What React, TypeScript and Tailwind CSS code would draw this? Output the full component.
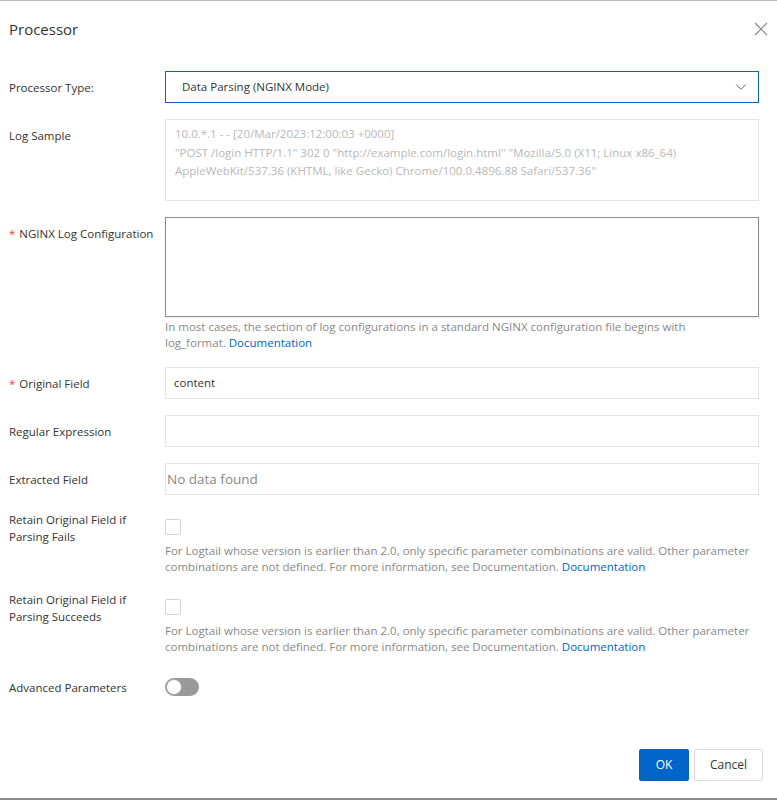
import { ChevronDown } from "lucide-react";

const font = { fontFamily: '"Segoe UI", "Open Sans", "Noto Sans", sans-serif' };

function Label({ text, required, top }: { text: string; required?: boolean; top?: boolean }) {
  return (
    <div className={`w-[156px] shrink-0 pr-1 text-[11.5px] leading-[17px] text-[#333] ${top ? "pt-2" : ""}`}>
      {required && <span className="mr-1 text-[#f23c3c]">*</span>}
      {text}
    </div>
  );
}

function Help({ children, gap }: { children: React.ReactNode; gap?: boolean }) {
  return <div className={`text-[11.5px] leading-4 text-[#888] ${gap ? "mt-[2px]" : ""}`}>{children}</div>;
}

const Doc = () => <a className="text-[#0064c8]">Documentation</a>;

const notice =
  "For Logtail whose version is earlier than 2.0, only specific parameter combinations are valid. Other parameter combinations are not defined. For more information, see Documentation. ";

export default function App() {
  return (
    <div style={font} className="flex h-[800px] w-[777px] flex-col border-t border-[#bcbcbc] bg-white">
      <div className="flex h-[56px] items-center justify-between pl-[9px] pr-2">
        <h1 className="text-[15px] text-[#333]">Processor</h1>
        <svg width="14" height="14" viewBox="0 0 14 14" className="mr-[1px]">
          <path d="M1 1 L13 13 M13 1 L1 13" stroke="#888" strokeWidth="1.2" fill="none" />
        </svg>
      </div>

      <div className="flex flex-1 flex-col gap-4 pl-[9px] pr-[18px] pt-[14px]">
        <div className="flex items-center">
          <Label text="Processor Type:" />
          <div className="flex h-8 flex-1 items-center justify-between border border-[#0064c8] pl-4 pr-2 text-[11.5px] text-[#333]">
            <span>Data Parsing (NGINX Mode)</span>
            <ChevronDown className="h-[18px] w-[18px] text-[#666]" strokeWidth={1.3} />
          </div>
        </div>

        <div className="flex">
          <Label text="Log Sample" top />
          <div className="h-[82px] flex-1 border border-[#e3e3e3] px-[9px] pt-[5px] text-[11.5px] leading-[18.5px] text-[#b8b8b8]">
            10.0.*.1 - - [20/Mar/2023:12:00:03 +0000]
            <br />
            "POST /login HTTP/1.1" 302 0 "http://example.com/login.html" "Mozilla/5.0 (X11; Linux x86_64)
            <br />
            AppleWebKit/537.36 (KHTML, like Gecko) Chrome/100.0.4896.88 Safari/537.36"
          </div>
        </div>

        <div className="flex">
          <Label text="NGINX Log Configuration" required top />
          <div className="flex-1">
            <div className="h-[100px] border border-[#8c8c8c] shadow-[0_1px_2px_rgba(0,0,0,0.08)]" />
            <Help gap>
              In most cases, the section of log configurations in a standard NGINX configuration file begins with
              <br />
              log_format. <Doc />
            </Help>
          </div>
        </div>

        <div className="flex items-center">
          <Label text="Original Field" required />
          <div className="flex h-8 flex-1 items-center border border-[#e3e3e3] px-2 text-[11.5px] text-[#333]">content</div>
        </div>

        <div className="flex items-center">
          <Label text="Regular Expression" />
          <div className="h-8 flex-1 border border-[#e3e3e3]" />
        </div>

        <div className="flex items-center">
          <Label text="Extracted Field" />
          <div className="flex h-8 flex-1 items-center border border-[#e3e3e3] px-[1px] text-[13.5px] text-[#888]">
            No data found
          </div>
        </div>

        {["Retain Original Field if Parsing Fails", "Retain Original Field if Parsing Succeeds"].map((t) => (
          <div key={t} className="flex">
            <Label text={t} />
            <div className="flex-1">
              <div className="flex h-8 items-center">
                <div className="h-4 w-4 rounded-[2px] border border-[#d3d3d3] bg-white" />
              </div>
              <Help>
                {notice}
                <Doc />
              </Help>
            </div>
          </div>
        ))}

        <div className="flex items-center">
          <Label text="Advanced Parameters" />
          <div className="flex h-8 items-center">
            <div className="flex h-[18px] w-[34px] items-center rounded-full bg-[#999] pl-[1px]">
              <div className="h-4 w-4 rounded-full border border-[#aaa] bg-white" />
            </div>
          </div>
        </div>
      </div>

      <div className="flex justify-end gap-[5px] px-[14px] pb-[17px]">
        <button className="h-8 w-[50px] rounded-[2px] bg-[#0064c8] text-[12px] text-white">OK</button>
        <button className="h-8 w-[69px] rounded-[2px] border border-[#dcdcdc] bg-white text-[12px] text-[#333]">
          Cancel
        </button>
      </div>
      <div className="h-[2px] bg-[#8a8a8a]" />
    </div>
  );
}
